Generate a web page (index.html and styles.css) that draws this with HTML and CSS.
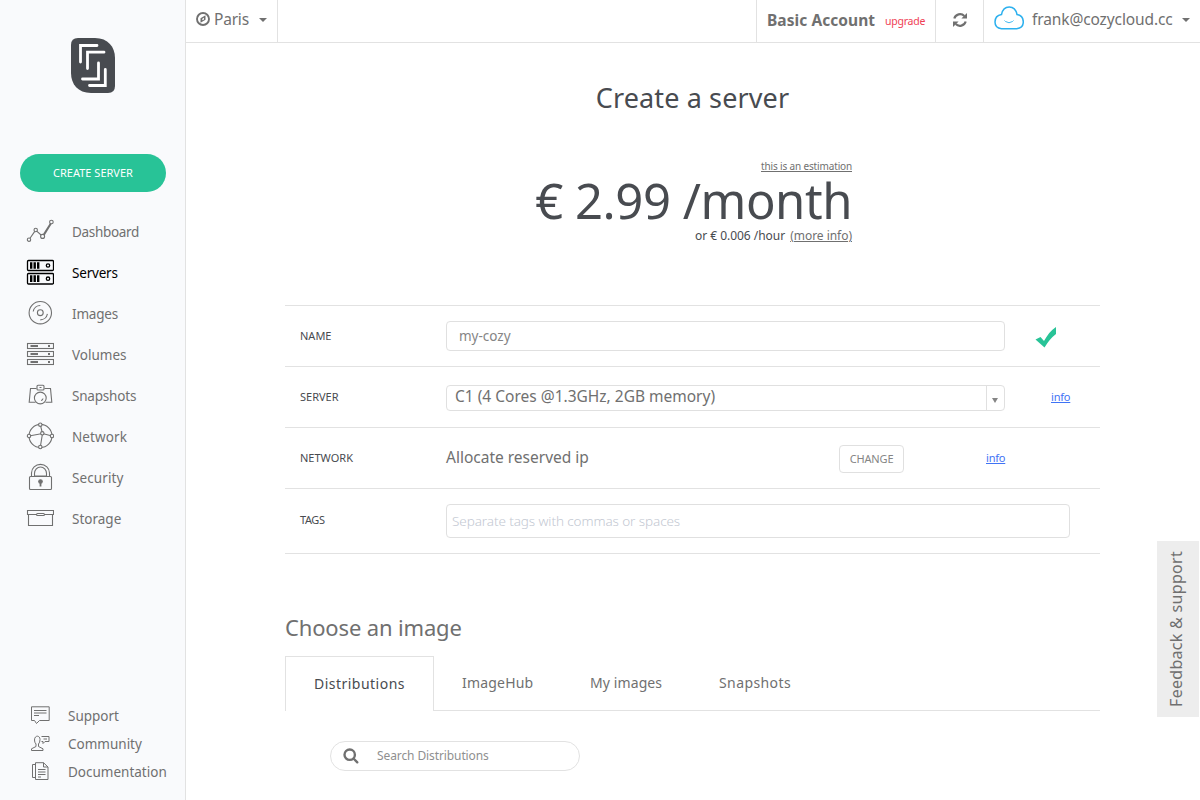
FILE: index.html
```html
<!DOCTYPE html>
<html lang="en">
<head>
<meta charset="utf-8">
<title>Create a server</title>
<link rel="stylesheet" href="styles.css">
</head>
<body>
<div class="app">
  <aside class="sidebar">
    <svg class="logo" viewBox="0 0 44 55">
      <path class="logo-bg" d="M7 0H24C37 0 44 9 44 20V48Q44 55 37 55H20C7 55 0 46 0 35V7Q0 0 7 0Z"/>
      <path class="logo-line" d="M9.500 24V7.500H26M16.500 30.500V14.200H33M27.500 25V41H11.500M34.300 31.500V47.500H18.500"/>
    </svg>
    <a class="create">CREATE SERVER</a>
    <nav class="nav">
      <a class="nav-item tight"><svg viewBox="0 0 28 28"><path d="M4 21.200L8.600 14.600M11 14.300L15.100 18M17.500 17.400L24.300 6.500M18.300 18L25.200 6.800"/><circle cx="3" cy="22.700" r="1.700"/><circle cx="9.700" cy="13" r="1.700"/><circle cx="16.600" cy="19.400" r="2"/><circle cx="25.400" cy="5" r="1.800"/></svg><span>Dashboard</span></a>
      <a class="nav-item active snug"><svg viewBox="0 0 28 28"><rect x="1.500" y="2.500" width="26" height="10" rx="1"/><rect x="1.500" y="15.500" width="26" height="10.500" rx="1"/><path class="thick" d="M5.200 4.300V10.700M8.700 4.300V10.700M12.200 4.300V10.700M5.200 17.300V24M8.700 17.300V24M12.200 17.300V24"/><circle cx="22" cy="7.500" r="1.700"/><circle cx="22" cy="20.700" r="1.700"/></svg><span>Servers</span></a>
      <a class="nav-item snug"><svg viewBox="0 0 28 28"><circle cx="14.300" cy="13.700" r="11.200"/><circle cx="14.300" cy="13.700" r="2.900"/><path d="M7.200 12.500A7.200 7.200 0 0 1 14.300 6.500M21.400 14.900A7.200 7.200 0 0 1 14.300 20.900"/></svg><span>Images</span></a>
      <a class="nav-item"><svg viewBox="0 0 28 28"><rect x="1.500" y="3.500" width="26" height="5"/><rect x="1.500" y="11.500" width="26" height="5"/><rect x="1.500" y="19.500" width="26" height="5"/><path class="mid" d="M4.500 6H12M4.500 14H12M4.500 22H12M22 6H24M22 14H24M22 22H24"/></svg><span>Volumes</span></a>
      <a class="nav-item snug"><svg viewBox="0 0 28 28"><path d="M10.500 7.500H4.500L3.200 21.200H9.500M18.500 7.500H24.500L25.800 21.200H19.500"/><rect x="11" y="4.300" width="7" height="4.700" rx="1"/><circle cx="14.300" cy="17" r="5.900"/><path d="M13.500 6.500H15.500M17 17.500Q16.700 19.200 15 19.500"/></svg><span>Snapshots</span></a>
      <a class="nav-item loose"><svg viewBox="0 0 28 28"><circle cx="14.500" cy="13.900" r="11.500"/><path d="M3 14L16.500 11.500L26 14M14.300 2.700L16.500 11.500L14.300 25"/><g class="knot"><circle cx="14.300" cy="2.700" r="1.700"/><circle cx="3" cy="14" r="1.700"/><circle cx="26" cy="14" r="1.700"/><circle cx="14.300" cy="25" r="1.700"/><circle cx="16.300" cy="11.300" r="1.700"/></g></svg><span>Network</span></a>
      <a class="nav-item loose"><svg viewBox="0 0 28 28"><rect x="3.500" y="13.500" width="22" height="13" rx="1"/><path d="M5.500 13V10A9 8.600 0 0 1 23.500 10V13M8.500 13V10.500A6 6.500 0 0 1 20.500 10.500V13Z"/><path class="mid" d="M14.500 19V23.500"/><circle class="fill" cx="14.500" cy="18.500" r="1.800"/></svg><span>Security</span></a>
      <a class="nav-item"><svg viewBox="0 0 28 28"><path d="M1.500 6.500H27.500V10.500H1.500ZM2.500 10.500V21.500H26.500V10.500"/><rect class="knot" x="10.500" y="9.500" width="8" height="2" rx="1"/></svg><span>Storage</span></a>
    </nav>
    <div class="help">
      <a class="help-item"><svg viewBox="0 0 20 20"><path d="M1.500 .800H19.200V14.500H9.500L6.500 17.500L4.500 14.500H1.500ZM4 4.500H16.500M4 7H16.500M4 9.500H9"/></svg><span>Support</span></a>
      <a class="help-item"><svg viewBox="0 0 20 20"><path d="M4.500 6C4.500 1 10 1 10 5.500Q10 8.500 8.500 10V12.500L13 14.800V16.500H1.500V14.800L6 12.500V10Q4.500 8.500 4.500 6ZM11.500 2.500H19V7.500H15L13 9.500V7.500H11.500M13.500 5H17"/></svg><span>Community</span></a>
      <a class="help-item"><svg viewBox="0 0 20 20"><path d="M5.500 .700H13.500L18 5V17.500H5.500ZM13.500 .700V5H18M5.500 2.500H2.500V15.500H5.500M8 7.500H15.500M8 10H15.500M8 12.500H15.500M8 15H11"/></svg><span>Documentation</span></a>
    </div>
  </aside>
  <div class="page">
    <header class="topbar">
      <div class="region"><svg class="compass" viewBox="0 0 14 14"><circle cx="7" cy="7" r="6"/><path class="needle" d="M4.500 6.300L9.500 3.300V7.800L4.500 10.800Z"/><path class="hub" d="M6.300 6.700L8 5.800V7.500L6.300 8.300Z"/></svg><span>Paris</span><i class="caret"></i></div>
      <div class="account"><b>Basic Account</b><a class="upgrade">upgrade</a></div>
      <div class="refresh"><svg viewBox="0 0 16 16"><path class="arc" d="M2.300 6.500A6 6 0 0 1 12.300 4M13.700 9.500A6 6 0 0 1 3.700 12"/><path class="head" d="M15 1V6.600H9.400ZM1 15V9.400H6.600Z"/></svg></div>
      <div class="user"><svg class="cloud" viewBox="0 0 30 24"><path d="M7.500 22.700Q1 22 1 16Q1 9.500 7.500 8.500Q9 1 15.200 1Q21.500 1 23 8.500Q29.300 9.500 29.300 16Q29.300 22 22.700 22.700Z"/><path class="smile" d="M10.500 14.500L11.500 15.500Q15 18 18.500 15.500L19.500 14.500"/></svg><span>frank@cozycloud.cc</span><i class="caret"></i></div>
    </header>
    <main class="content">
      <h1 class="title">Create a server</h1>
      <section class="pricing">
        <a class="estimate">this is an estimation</a>
        <div class="price">€ 2.99 /month</div>
        <div class="hourly"><span>or € 0.006 /hour</span><a class="more">(more info)</a></div>
      </section>
      <section class="form">
        <div class="row"><label class="label">NAME</label><div class="field name-field">my-cozy</div>
          <svg class="check" viewBox="0 0 22 22"><path d="M.500 13.500L5.500 11L9 15C12 9.500 16 4 21 1V8Q14.500 13 9.500 21.500Z"/></svg></div>
        <div class="row"><label class="label">SERVER</label><div class="field select"><span>C1 (4 Cores @1.3GHz, 2GB memory)</span><div class="drop"><i class="arrow"></i></div></div><a class="info server-info">info</a></div>
        <div class="row"><label class="label">NETWORK</label><span class="ip">Allocate reserved ip</span><a class="change">CHANGE</a><a class="info ip-info">info</a></div>
        <div class="row tags-row"><label class="label tags-label">TAGS</label><div class="field tags">Separate tags with commas or spaces</div></div>
      </section>
      <h2 class="subtitle">Choose an image</h2>
      <div class="tabs"><a class="tab current">Distributions</a><a class="tab hub-tab">ImageHub</a><a class="tab mine-tab">My images</a><a class="tab snap-tab">Snapshots</a></div>
      <div class="search"><svg viewBox="0 0 16 16"><circle cx="6.700" cy="6.700" r="5.200"/><path d="M10.500 10.500L14.300 14.300"/></svg><span>Search Distributions</span></div>
    </main>
  </div>
  <div class="feedback"><span>Feedback &amp; support</span></div>
</div>
</body>
</html>
```
FILE: styles.css
```css
* { box-sizing: border-box; }
body { margin: 0; font-family: "Noto Sans", "Open Sans", sans-serif; color: #707070; background: #fff; }
svg { display: block; flex: none; fill: none; stroke: currentColor; }
.app { position: relative; display: flex; width: 1200px; height: 800px; overflow: hidden; }

.sidebar { width: 186px; flex: none; display: flex; flex-direction: column; background: #f9fafc; border-right: 1px solid #e2e2e2; padding-top: 38px; }
.logo { width: 44px; height: 55px; margin-left: 71px; }
.logo-bg { fill: #484b50; stroke: none; }
.logo-line { stroke: #fff; stroke-width: 2.8; stroke-linecap: round; }
.create { margin: 61px 0 0 20px; width: 146px; height: 38px; padding-bottom: 2px; border-radius: 19px; background: #28c397; color: #fff; font-size: 11px; display: flex; align-items: center; justify-content: center; }
.nav { margin-top: 19px; font-size: 13.5px; }
.nav-item { display: flex; align-items: center; height: 41px; padding-left: 26px; gap: 18px; }
.nav-item svg { width: 28px; height: 28px; margin-bottom: 1px; stroke-width: 1.1; }
.nav-item.active { color: #000; }
.nav-item.active svg { stroke-width: 1.3; }
.nav-item .thick { stroke-width: 2.4; }
.nav-item .mid { stroke-width: 1.8; }
.knot { fill: #f9fafc; }
.fill { fill: currentColor; }
.tight { letter-spacing: -.33px; }
.snug { letter-spacing: -.2px; }
.loose { letter-spacing: .1px; }
.help { margin: auto 0 14px; font-size: 13.5px; }
.help-item { display: flex; align-items: center; height: 28px; padding-left: 30px; gap: 18px; }
.help-item svg { width: 20px; height: 20px; stroke-width: 1; }

.page { flex: 1; min-width: 0; }
.topbar { display: flex; height: 43px; border-bottom: 1px solid #e2e2e2; font-size: 15.5px; line-height: 38px; }
.topbar > div { display: flex; }
.caret { border: 4px solid transparent; border-top-color: #707070; border-bottom: 0; margin-top: 18px; height: 0; }
.region { width: 92px; border-right: 1px solid #e2e2e2; padding-left: 10px; letter-spacing: -.2px; }
.region span { width: 45px; margin-left: 4px; }
.compass { width: 14px; height: 14px; margin-top: 12px; stroke-width: 1.9; }
.needle { fill: currentColor; stroke: none; }
.hub { fill: #fff; stroke: none; }
.account { margin-left: auto; width: 180px; border-left: 1px solid #e2e2e2; border-right: 1px solid #e2e2e2; padding-left: 10px; line-height: 40px; }
.account b { width: 118px; white-space: nowrap; letter-spacing: .06px; }
.upgrade { color: #ef3e55; font-size: 10.5px; letter-spacing: -.25px; line-height: 42px; }
.refresh { width: 48px; border-right: 1px solid #e2e2e2; justify-content: center; padding-top: 12px; }
.refresh svg { width: 16px; height: 16px; }
.arc { stroke-width: 2.2; }
.head { fill: currentColor; stroke: none; }
.user { width: 216px; padding-left: 10px; letter-spacing: -.12px; }
.user span { width: 150px; margin-left: 8px; }
.cloud { width: 30px; height: 24px; margin-top: 6px; color: #2cb0ee; stroke-width: 1.5; }
.smile { stroke-width: .9; }

.content { width: 815px; margin-left: 99px; }
.title { margin: 35px 0 0; font-size: 27px; line-height: 40px; font-weight: 400; text-align: center; color: #484b50; letter-spacing: .12px; }
.pricing { width: 567px; height: 126px; padding-top: 41px; text-align: right; color: #484b50; }
.estimate, .more { color: #707070; text-decoration: underline; }
.estimate { display: block; font-size: 10px; line-height: 14px; letter-spacing: -.15px; }
.price { font-size: 49px; line-height: 54px; letter-spacing: -.45px; white-space: nowrap; }
.hourly { display: flex; justify-content: flex-end; gap: 5px; font-size: 12px; line-height: 18px; letter-spacing: -.03px; }
.form { margin-top: 61px; height: 249px; border-bottom: 1px solid #e2e2e2; }
.row { display: flex; align-items: center; height: 61px; padding-left: 15px; border-top: 1px solid #e2e2e2; }
.tags-row { height: 65px; }
.label { width: 146px; font-size: 11px; color: #484b50; padding-bottom: 2px; }
.tags-label { letter-spacing: -.4px; padding-bottom: 3px; }
.field { display: flex; align-items: center; border: 1px solid #e0e0e0; border-radius: 4px; width: 559px; }
.name-field { height: 30px; padding-left: 12px; font-size: 13.5px; color: #858585; }
.check { width: 22px; height: 22px; margin: 1px 0 0 30px; fill: #28c397; stroke: none; }
.select { height: 26px; margin-top: 2px; padding-left: 8px; font-size: 15.5px; justify-content: space-between; line-height: 22px; }
.select span { margin-top: -5px; }
.drop { width: 18px; height: 24px; border-left: 1px solid #e0e0e0; display: flex; align-items: center; justify-content: center; padding: 5px 1px 0 0; }
.arrow { border: 3px solid transparent; border-top: 5px solid #858585; border-bottom: 0; }
.info { color: #3f73f5; font-size: 11px; text-decoration: underline; letter-spacing: -.2px; margin-top: -2px; }
.server-info { margin-left: 46px; }
.ip { width: 393px; font-size: 15.5px; padding-bottom: 2px; }
.change { width: 65px; height: 28px; margin-top: 2px; padding-bottom: 2px; border: 1px solid #e0e0e0; border-radius: 4px; font-size: 11px; letter-spacing: -.15px; color: #858585; display: flex; align-items: center; justify-content: center; }
.ip-info { margin-left: 82px; }
.tags { width: 624px; height: 34px; padding-left: 5px; font-size: 13.5px; font-weight: 300; letter-spacing: -.09px; color: #c3c8d2; }
.subtitle { margin: 57px 0 0; font-size: 22px; line-height: 32px; font-weight: 400; letter-spacing: -.15px; }
.tabs { display: flex; height: 55px; margin-top: 13px; border-bottom: 1px solid #e2e2e2; font-size: 14px; line-height: 53px; }
.current { width: 149px; height: 55px; border: 1px solid #e2e2e2; border-bottom: 0; background: #fff; color: #484b50; padding-left: 28px; letter-spacing: .48px; }
.hub-tab { width: 128px; margin-left: 28px; letter-spacing: .2px; }
.mine-tab { width: 129px; letter-spacing: .1px; }
.snap-tab { letter-spacing: .4px; }
.search { display: flex; align-items: center; width: 250px; height: 30px; margin: 30px 0 0 45px; padding-left: 12px; border: 1px solid #e2e2e2; border-radius: 15px; font-size: 12px; color: #8f8f8f; letter-spacing: -.1px; }
.search span { padding-bottom: 2px; }
.search svg { width: 16px; height: 16px; margin-right: 18px; color: #707070; stroke-width: 2.4; stroke-linecap: round; }
.feedback { position: absolute; left: 1157px; top: 541px; width: 42px; height: 176px; padding-right: 4px; background: #ededed; display: flex; align-items: center; justify-content: center; font-size: 16px; letter-spacing: .3px; }
.feedback span { writing-mode: vertical-rl; transform: rotate(180deg); white-space: nowrap; }
```
